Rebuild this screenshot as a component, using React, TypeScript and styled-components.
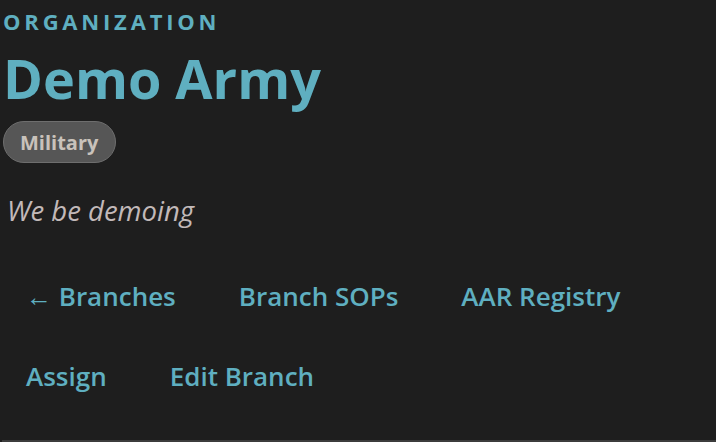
import React from "react";
import styled, { createGlobalStyle } from "styled-components";

const GlobalStyle = createGlobalStyle`
    html, body {
        margin: 0;
        padding: 0;
        background: #1e1e1e;
    }
    body {
        font-family: "Open Sans", "Noto Sans", sans-serif;
        overflow: hidden;
    }
`;

const Page = styled.div`
    height: 442px;
    display: flex;
    flex-direction: column;
`;

const Content = styled.div`
    flex: 1;
    display: flex;
    flex-direction: column;
    align-items: flex-start;
    padding: 7px 0 0 3px;
`;

const Eyebrow = styled.div`
    font-size: 22px;
    font-weight: 700;
    letter-spacing: 3.8px;
    color: #5fafc0;
    line-height: 28px;
`;

const Title = styled.h1`
    margin: 0;
    font-size: 54px;
    font-weight: 700;
    color: #5fafc0;
    line-height: 86px;
`;

const Badge = styled.span`
    display: flex;
    align-items: center;
    height: 42px;
    box-sizing: border-box;
    padding: 0 17px 0 16px;
    border-radius: 21px;
    background: #565656;
    border: 1px solid #6e6e6e;
    color: #c9c2bb;
    font-size: 20px;
    font-weight: 700;
`;

const Description = styled.p`
    margin: 30px 0 0 4px;
    font-size: 27.5px;
    font-style: italic;
    color: #c2b9b9;
    line-height: 36px;
`;

const Nav = styled.nav`
    display: flex;
    flex-direction: column;
    gap: 28px;
    margin-top: 41px;
`;

const NavRow = styled.div`
    display: flex;
    column-gap: 17px;
`;

const NavLink = styled.a`
    padding: 0 23px;
    font-size: 26px;
    font-weight: 600;
    color: #5fafc0;
    text-decoration: none;
    line-height: 52px;
    cursor: pointer;
`;

const Footer = styled.div`
    height: 2px;
    margin-left: 2px;
    background: #3c3c3c;
`;

const rows = [
    ["← Branches", "Branch SOPs", "AAR Registry"],
    ["Assign", "Edit Branch"],
];

export default function App() {
    return (
        <Page>
            <GlobalStyle />
            <Content>
                <Eyebrow>ORGANIZATION</Eyebrow>
                <Title>Demo Army</Title>
                <Badge>Military</Badge>
                <Description>We be demoing</Description>
                <Nav>
                    {rows.map((row, i) => (
                        <NavRow key={i}>
                            {row.map((l) => (
                                <NavLink key={l}>{l}</NavLink>
                            ))}
                        </NavRow>
                    ))}
                </Nav>
            </Content>
            <Footer />
        </Page>
    );
}
